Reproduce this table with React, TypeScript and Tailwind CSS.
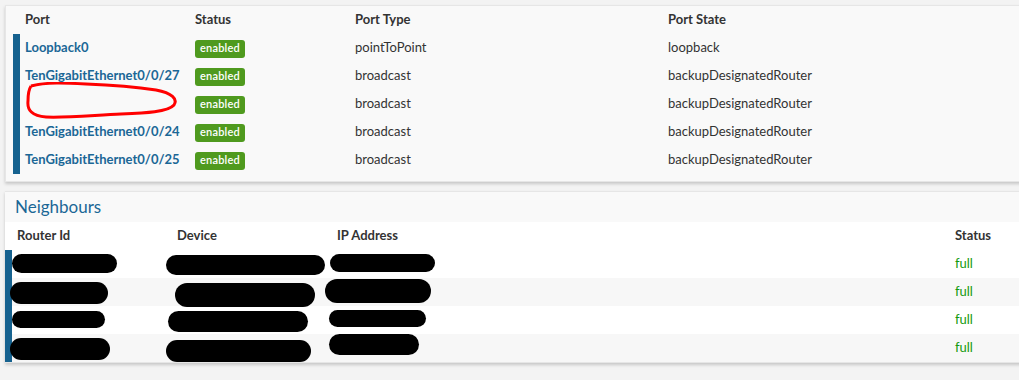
import React from 'react';

const ports = [
  { name: 'Loopback0', type: 'pointToPoint', state: 'loopback' },
  { name: 'TenGigabitEthernet0/0/27', type: 'broadcast', state: 'backupDesignatedRouter' },
  { name: '', type: 'broadcast', state: 'backupDesignatedRouter', scribble: true },
  { name: 'TenGigabitEthernet0/0/24', type: 'broadcast', state: 'backupDesignatedRouter' },
  { name: 'TenGigabitEthernet0/0/25', type: 'broadcast', state: 'backupDesignatedRouter' },
];

// redacted cells: [offsetX, offsetY, width, height] relative to the cell
type Blob = [number, number, number, number];
const neighbours: { router: Blob; device: Blob; ip: Blob }[] = [
  { router: [0, 4, 105, 19], device: [-6, 5, 159, 20], ip: [-2, 4, 105, 18] },
  { router: [-2, 4, 98, 22], device: [3, 5, 140, 24], ip: [-7, 1, 106, 24] },
  { router: [0, 5, 93, 17], device: [-4, 5, 140, 21], ip: [-3, 4, 97, 17] },
  { router: [-2, 4, 100, 22], device: [-6, 6, 145, 22], ip: [-3, 0, 90, 21] },
];

const Redacted = ({ b }: { b: Blob }) => (
  <div
    className="absolute bg-black rounded-full"
    style={{ left: b[0], top: b[1], width: b[2], height: b[3] }}
  />
);

export default function App() {
  return (
    <div
      className="w-[1019px] h-[380px] overflow-hidden bg-[#f3f3f3] text-[13px] text-[#333]"
      style={{ fontFamily: 'Lato, "Open Sans", sans-serif' }}
    >
      <div className="pt-[5px] pl-[5px]">
        {/* Interfaces card */}
        <div className="w-[1030px] bg-[#f9f9f9] border border-[#e6e6e6] shadow-[0_2px_3px_rgba(0,0,0,0.18)] pl-[7px] pb-[7px]">
          <div className="flex h-[28px] items-center font-bold pl-[7px]">
            <div className="w-[170px] px-[5px]">Port</div>
            <div className="w-[160px] px-[5px]">Status</div>
            <div className="w-[313px] px-[5px]">Port Type</div>
            <div className="flex-1 px-[5px]">Port State</div>
          </div>
          <div className="border-l-[7px] border-[#16628f]">
            {ports.map((p, i) => (
              <div key={i} className="flex h-[28px] items-center">
                <div className="relative w-[170px] h-full flex items-center px-[5px] font-bold text-[#1b6796] whitespace-nowrap">
                  {p.name}
                  {p.scribble && (
                    <svg className="absolute left-[6px] top-[-8px]" width="154" height="40" viewBox="0 0 154 40">
                      <path
                        d="M5 4 C20 0 40 1 60 2 C85 3 110 5 130 8 C146 11 152 17 148 23 C142 30 120 31 95 32 C70 33 40 36 20 35 C6 34 1 28 2 19 C2 12 3 7 5 4"
                        fill="none"
                        stroke="#ff0000"
                        strokeWidth="3"
                      />
                    </svg>
                  )}
                </div>
                <div className="w-[160px] px-[5px]">
                  <span className="inline-flex items-center justify-center w-[50px] h-[18px] rounded-[3px] bg-[#4f9a1e] text-white text-[11px] font-semibold tracking-[0.2px]">
                    enabled
                  </span>
                </div>
                <div className="w-[313px] px-[5px]">{p.type}</div>
                <div className="flex-1 px-[5px]">{p.state}</div>
              </div>
            ))}
          </div>
        </div>

        {/* Neighbours card */}
        <div className="mt-[9px] w-[1030px] bg-white border border-[#e6e6e6] border-l-0 shadow-[0_2px_3px_rgba(0,0,0,0.18)]">
          <div className="h-[30px] bg-[#f9f9f9] flex items-center pl-[10px] text-[17px] text-[#1b6796]">Neighbours</div>
          <div className="flex h-[28px] items-center font-bold pl-[7px]">
            <div className="w-[160px] px-[5px]">Router Id</div>
            <div className="w-[160px] px-[5px]">Device</div>
            <div className="w-[618px] px-[5px]">IP Address</div>
            <div className="flex-1 px-[5px]">Status</div>
          </div>
          <div className="border-l-[7px] border-[#16628f]">
            {neighbours.map((n, i) => (
              <div key={i} className={`flex h-[28px] items-center ${i % 2 === 1 ? 'bg-[#f7f7f7]' : 'bg-white'}`}>
                <div className="relative w-[160px] h-full">
                  <Redacted b={n.router} />
                </div>
                <div className="relative w-[160px] h-full">
                  <Redacted b={n.device} />
                </div>
                <div className="relative w-[618px] h-full">
                  <Redacted b={n.ip} />
                </div>
                <div className="flex-1 px-[5px] text-[#139a0c]">full</div>
              </div>
            ))}
          </div>
        </div>
      </div>
    </div>
  );
}
